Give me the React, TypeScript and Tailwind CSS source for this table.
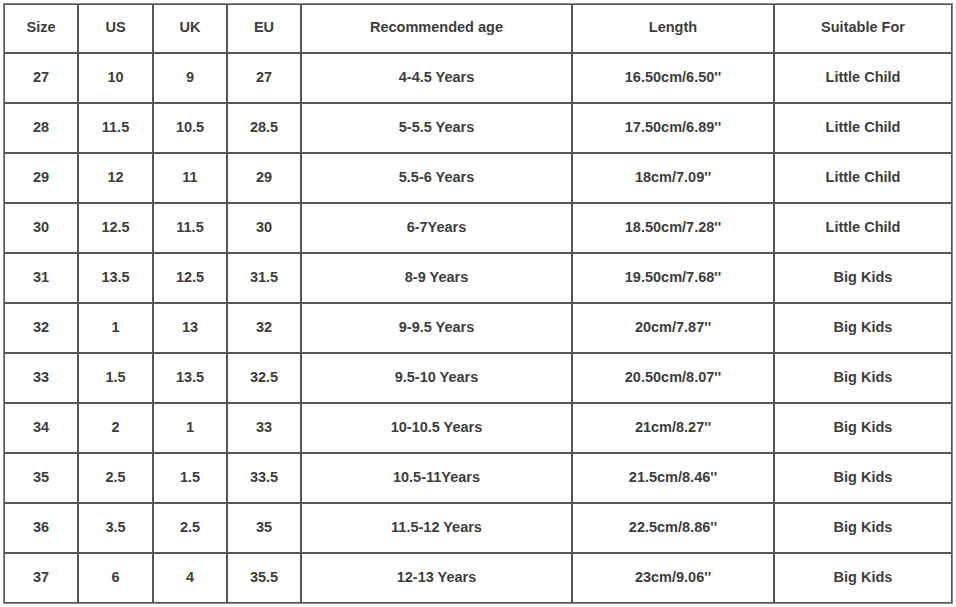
import React from "react";

const header = ["Size", "US", "UK", "EU", "Recommended age", "Length", "Suitable For"];
const rows: string[][] = [
  ["27", "10", "9", "27", "4-4.5 Years", "16.50cm/6.50''", "Little Child"],
  ["28", "11.5", "10.5", "28.5", "5-5.5 Years", "17.50cm/6.89''", "Little Child"],
  ["29", "12", "11", "29", "5.5-6 Years", "18cm/7.09''", "Little Child"],
  ["30", "12.5", "11.5", "30", "6-7Years", "18.50cm/7.28''", "Little Child"],
  ["31", "13.5", "12.5", "31.5", "8-9 Years", "19.50cm/7.68''", "Big Kids"],
  ["32", "1", "13", "32", "9-9.5 Years", "20cm/7.87''", "Big Kids"],
  ["33", "1.5", "13.5", "32.5", "9.5-10 Years", "20.50cm/8.07''", "Big Kids"],
  ["34", "2", "1", "33", "10-10.5 Years", "21cm/8.27''", "Big Kids"],
  ["35", "2.5", "1.5", "33.5", "10.5-11Years", "21.5cm/8.46''", "Big Kids"],
  ["36", "3.5", "2.5", "35", "11.5-12 Years", "22.5cm/8.86''", "Big Kids"],
  ["37", "6", "4", "35.5", "12-13 Years", "23cm/9.06''", "Big Kids"],
];

const widths = ["w-[74px]", "w-[75px]", "w-[74px]", "w-[74px]", "w-[271px]", "w-[202px]", "w-[178px]"];

export default function App() {
  return (
    <div className="w-[956px] h-[607px] bg-white pt-[3px] pl-[3px] overflow-hidden" style={{ fontFamily: '"Liberation Sans", Arial, sans-serif' }}>
      <table className="table-fixed border-separate border-spacing-0 border border-[#8a8a8a] w-[950px] text-[14.5px] font-bold text-[#3d3d3d]">
        <colgroup>
          {widths.map((w, i) => (
            <col key={i} className={w} />
          ))}
        </colgroup>
        <thead>
          <tr>
            {header.map((h, i) => (
              <td key={i} className="h-[49px] border border-[#555] text-center align-middle p-0 pb-[1px]">
                {h}
              </td>
            ))}
          </tr>
        </thead>
        <tbody>
          {rows.map((r, ri) => (
            <tr key={ri}>
              {r.map((c, ci) => (
                <td key={ci} className="h-[50px] border border-[#555] text-center align-middle p-0 pb-[1px]">
                  {c}
                </td>
              ))}
            </tr>
          ))}
        </tbody>
      </table>
    </div>
  );
}
